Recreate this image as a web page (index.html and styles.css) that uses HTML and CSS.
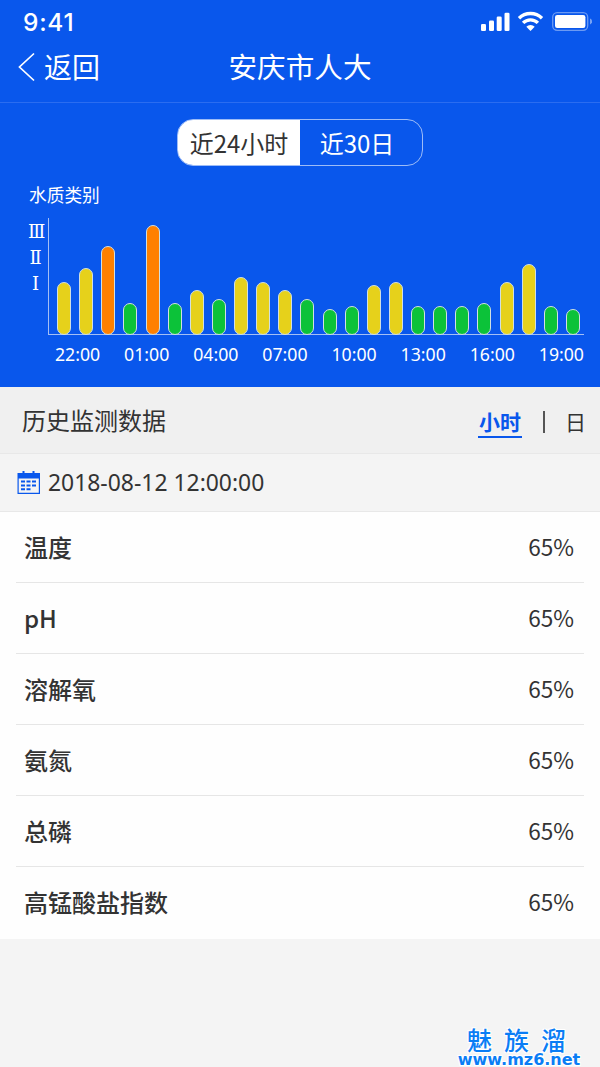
FILE: index.html
```html
<!DOCTYPE html>
<html lang="zh-CN">
<head>
    <meta charset="UTF-8">
    <meta name="viewport" content="width=device-width, initial-scale=1.0">
    <title>安庆市人大</title>
    <link rel="stylesheet" href="styles.css">
</head>
<body>
    <header class="top">
        <div class="status">
            <span class="time">9:41</span>
            <svg class="status-icons" width="112" height="24" viewBox="0 0 112 24">
                <g fill="#fff">
                    <rect x="1" y="14" width="5" height="7" rx="1.3"/>
                    <rect x="9" y="10.5" width="5" height="10.5" rx="1.3"/>
                    <rect x="16.7" y="6.5" width="5" height="14.5" rx="1.3"/>
                    <rect x="24.5" y="2.7" width="5" height="18.3" rx="1.3"/>
                    <path d="M46.3 16.7 50.5 20.9 54.7 16.7 A6 6 0 0 0 46.3 16.7Z"/>
                </g>
                <path d="M39 8.2 A16.5 16.5 0 0 1 62 8.2 M43.1 12.9 A10.5 10.5 0 0 1 57.9 12.9" fill="none" stroke="#fff" stroke-width="3.4"/>
                <rect x="72.7" y="2.7" width="35" height="17.6" rx="4.5" fill="none" stroke="#fff" stroke-opacity=".4" stroke-width="1.3"/>
                <rect x="75" y="5" width="30.4" height="13" rx="2.2" fill="#fff"/>
                <path d="M110 8.5 A3.2 3.2 0 0 1 110 14.5Z" fill="#fff" fill-opacity=".45"/>
            </svg>
        </div>
        <div class="nav">
            <a class="back"><svg width="18" height="30" viewBox="0 0 18 30"><path d="M16 1.500 1.500 15 16 28.500" fill="none" stroke="#fff" stroke-width="1.700"/></svg>返回</a>
            <h1>安庆市人大</h1>
        </div>
    </header>

    <section class="chart">
        <div class="switch">
            <span class="switch-item active">近24小时</span>
            <span class="switch-item">近30日</span>
        </div>
        <p class="chart-title">水质类别</p>
        <div class="chart-body">
            <div class="levels">
                <span>Ⅲ</span>
                <span>Ⅱ</span>
                <span>Ⅰ</span>
            </div>
            <div class="bars">
                <i class="bar yellow" style="height: 53px"></i>
                <i class="bar yellow" style="height: 67px"></i>
                <i class="bar orange" style="height: 89px"></i>
                <i class="bar green" style="height: 32px"></i>
                <i class="bar orange" style="height: 110px"></i>
                <i class="bar green" style="height: 32px"></i>
                <i class="bar yellow" style="height: 45px"></i>
                <i class="bar green" style="height: 36px"></i>
                <i class="bar yellow" style="height: 58px"></i>
                <i class="bar yellow" style="height: 53px"></i>
                <i class="bar yellow" style="height: 45px"></i>
                <i class="bar green" style="height: 36px"></i>
                <i class="bar green" style="height: 26px"></i>
                <i class="bar green" style="height: 29px"></i>
                <i class="bar yellow" style="height: 50px"></i>
                <i class="bar yellow" style="height: 53px"></i>
                <i class="bar green" style="height: 29px"></i>
                <i class="bar green" style="height: 29px"></i>
                <i class="bar green" style="height: 29px"></i>
                <i class="bar green" style="height: 32px"></i>
                <i class="bar yellow" style="height: 53px"></i>
                <i class="bar yellow" style="height: 71px"></i>
                <i class="bar green" style="height: 29px"></i>
                <i class="bar green" style="height: 26px"></i>
            </div>
        </div>
        <div class="hours">
            <span>22:00</span>
            <span>01:00</span>
            <span>04:00</span>
            <span>07:00</span>
            <span>10:00</span>
            <span>13:00</span>
            <span>16:00</span>
            <span>19:00</span>
        </div>
    </section>

    <section class="history">
        <div class="history-head">
            <h2>历史监测数据</h2>
            <div class="tabs">
                <span class="tab active">小时</span>
                <span class="line"></span>
                <span class="tab">日</span>
            </div>
        </div>
        <div class="date">
            <svg width="24" height="24" viewBox="0 0 24 24">
                <path d="M0.500 2H5.500V0H7.500V2H15.500V0H17.500V2H23V23H0.500Z M1.700 7.500V21.800H21.800V7.500Z" fill="#0957ec" fill-rule="evenodd"/>
                <path d="M4 10.500H8M9.500 10.500H13.500M15 10.500H19M4 14.500H8M9.500 14.500H13.500M15 14.500H19M4 18.300H8M9.500 18.300H13.500" stroke="#0957ec" stroke-width="2"/>
            </svg>
            <span>2018-08-12 12:00:00</span>
        </div>
        <ul class="list">
            <li><span>温度</span><b>65%</b></li>
            <li><span>pH</span><b>65%</b></li>
            <li><span>溶解氧</span><b>65%</b></li>
            <li><span>氨氮</span><b>65%</b></li>
            <li><span>总磷</span><b>65%</b></li>
            <li><span>高锰酸盐指数</span><b>65%</b></li>
        </ul>
    </section>

    <div class="mark">
        <span class="mark-name">魅族溜</span>
        <span class="mark-url">www.mz6.net</span>
    </div>
</body>
</html>
```

FILE: styles.css
```css
* {
    box-sizing: border-box;
}

body {
    position: relative;
    margin: 0;
    height: 1067px;
    overflow: hidden;
    background-color: #f4f4f4;
    color: #333;
    font-family: "Noto Sans CJK SC", sans-serif;
}

h1, h2, p, ul {
    margin: 0;
    padding: 0;
    font-weight: normal;
}

svg {
    display: block;
}

.top {
    height: 103px;
    background-color: #0957ec;
    border-bottom: 1px solid #2b6df0;
    color: white;
}

.status {
    display: flex;
    justify-content: space-between;
    height: 44px;
    padding: 10px 8px 0 23px;
}

.time {
    font: 500 24.5px/24px Inter, sans-serif;
    letter-spacing: 0.7px;
}

.nav {
    display: grid;
    grid-template-columns: 1fr auto 1fr;
    height: 45px;
    padding: 0 18px;
    align-items: center;
}

.back {
    display: flex;
    align-items: center;
    gap: 8px;
    font-size: 28px;
    line-height: 45px;
}

h1 {
    font-size: 28.6px;
    line-height: 42px;
    padding-bottom: 2px;
}

.chart {
    height: 284px;
    padding-top: 16px;
    background-color: #0957ec;
    color: white;
}

.switch {
    display: flex;
    width: 246px;
    height: 47px;
    margin: 0 auto;
    border: 1px solid #9dbcf7;
    border-radius: 16px;
    overflow: hidden;
}

.switch-item {
    width: 122px;
    font-size: 24px;
    line-height: 46px;
    text-align: center;
}

.switch-item + .switch-item {
    padding-right: 8px;
}

.switch-item.active {
    background-color: white;
    color: #333;
}

.chart-title {
    margin: 15px 0 0 29px;
    font-size: 17.7px;
    line-height: 26px;
}

.chart-body {
    display: flex;
    height: 117px;
    margin-top: 11px;
    padding: 0 16px 0 28px;
}

.levels {
    width: 20px;
    padding: 1px 5px 0 0;
    font: 18px/26px "DejaVu Serif", serif;
    text-align: center;
}

.levels span {
    display: block;
}

.bars {
    display: flex;
    flex: 1;
    align-items: flex-end;
    justify-content: space-between;
    padding: 0 4px 0 8px;
    border-left: 1px solid #a4bff5;
    border-bottom: 1px solid #a4bff5;
}

.bar {
    width: 14px;
    margin-bottom: -1px;
    border: 1px solid #d0dfe2;
    border-radius: 7px;
}

.yellow {
    background-color: #e6d11b;
}

.orange {
    background-color: #ff8000;
}

.green {
    background-color: #0cc239;
}

.hours {
    display: flex;
    justify-content: space-between;
    padding: 7px 16px 0 55px;
    font: 17.7px/24px "Noto Sans", sans-serif;
}

.history-head {
    display: flex;
    justify-content: space-between;
    height: 67px;
    padding: 0 14px 0 22px;
    background-color: #f0f0f0;
    border-bottom: 1px solid #e8e8e8;
}

h2 {
    font-size: 24px;
    line-height: 66px;
}

.tabs {
    display: flex;
    align-items: flex-start;
    padding-top: 18px;
    font-size: 21px;
}

.tab {
    height: 33px;
    line-height: 33px;
}

.tab.active {
    padding: 0 1px;
    border-bottom: 2px solid #0957ec;
    color: #0957ec;
    font-weight: bold;
}

.line {
    width: 2px;
    height: 22px;
    margin: 6px 20px 0 21px;
    background-color: #555;
}

.date {
    display: flex;
    align-items: center;
    gap: 7px;
    height: 58px;
    padding-left: 17px;
    border-bottom: 1px solid #e8e8e8;
    font: 22.9px/58px "Noto Sans", sans-serif;
}

.list {
    list-style: none;
    padding: 0 16px;
    background-color: #fefefe;
}

.list li {
    display: flex;
    justify-content: space-between;
    height: 71.1px;
    padding: 0 10px 0 8px;
    border-bottom: 1px solid #e6e6e6;
    font-size: 24px;
    line-height: 69px;
}

.list li:last-child {
    border-bottom: none;
}

.list span {
    font-weight: 500;
}

.list b {
    font-size: 22.5px;
    font-weight: normal;
}

/* site mark over the bottom right corner */
.mark {
    position: absolute;
    right: 16px;
    bottom: 0;
    width: 130px;
    color: #0a7df5;
    text-align: center;
    text-shadow: 1px 1px white, -1px -1px white, 1px -1px white, -1px 1px white;
}

.mark span {
    display: block;
}

.mark-name {
    padding-left: 7px;
    font-size: 25px;
    font-weight: 500;
    line-height: 28px;
    letter-spacing: 12px;
}

.mark-url {
    font: bold 16px/14px "DejaVu Sans", sans-serif;
}
```
